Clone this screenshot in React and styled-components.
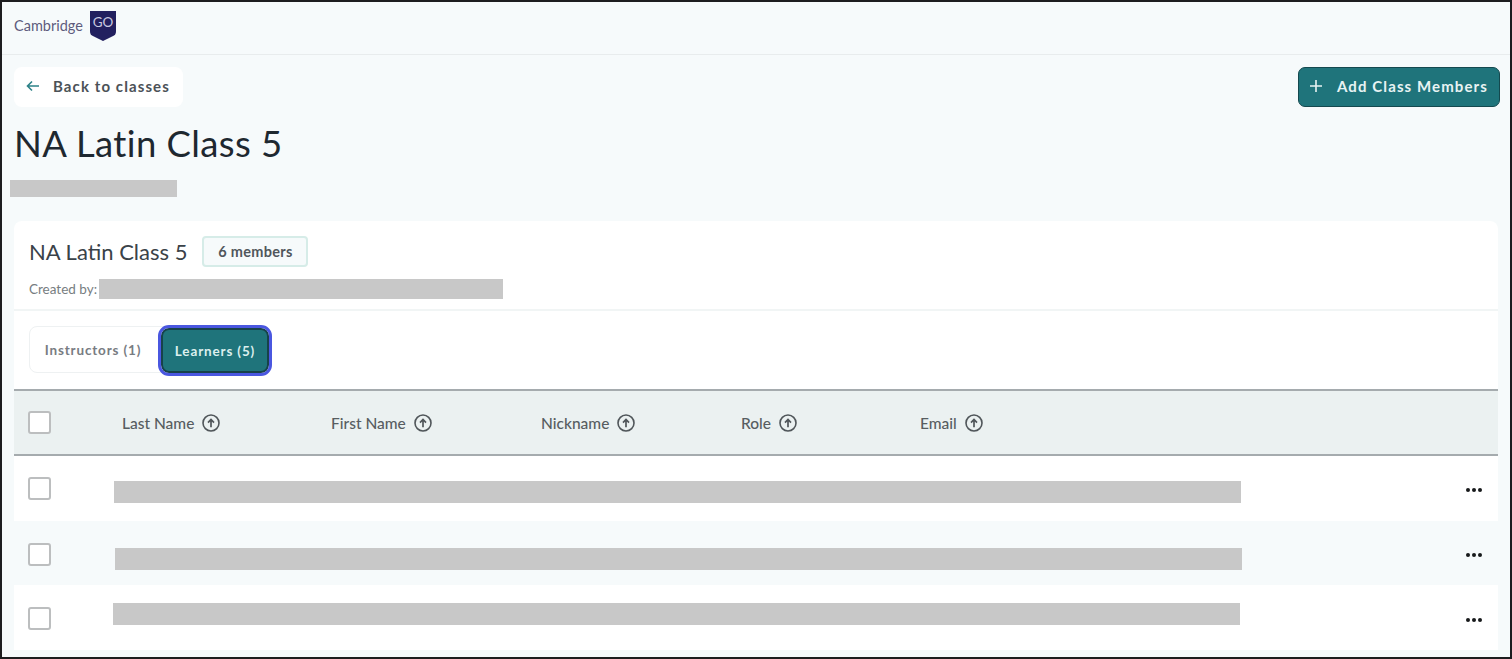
import React from 'react';
import styled, { createGlobalStyle } from 'styled-components';

const Global = createGlobalStyle`
  html, body { margin: 0; padding: 0; background: #f6fafb; }
  * { box-sizing: border-box; }
`;
const Frame = styled.div`
  width: 1512px; height: 659px; overflow: hidden;
  border: 2px solid #1d1d1f;
  background: #f6fafb;
  font-family: Lato, "Open Sans", sans-serif;
  color: #1f2a30;
  display: flex; flex-direction: column;
`;
const TopBar = styled.header`
  height: 53px; flex: none;
  border-bottom: 1px solid #e8eced;
  display: flex; align-items: center; gap: 7px;
  padding: 0 0 5px 12px;
`;
const LogoWord = styled.span`
  font-size: 14.5px; color: #5d5b7d;
`;
const Toolbar = styled.div`
  display: flex; justify-content: space-between;
  padding: 12px 10px 0 12px;
`;
const BackButton = styled.button`
  width: 169px; height: 40px; border: 0; border-radius: 8px; background: #fff;
  display: flex; align-items: center; gap: 13px; padding: 0 0 2px 12px;
  font: 700 15px Lato, sans-serif; letter-spacing: 1.1px; color: #4c5257;
`;
const AddButton = styled.button`
  width: 202px; height: 40px; border: 1px solid #14494f; border-radius: 7px;
  background: #1f747b; color: #e8f3f3;
  display: flex; align-items: center; gap: 14px; padding: 0 0 2px 10px;
  font: 700 15px Lato, sans-serif; letter-spacing: 1.1px;
`;
const Title = styled.h1`
  margin: 14px 0 0 12px; height: 44px; line-height: 44px;
  font-weight: 400; font-size: 36.5px; color: #1e2830; letter-spacing: .4px;
`;
const Redacted = styled.div`
  background: #c8c8c8; flex: none;
  width: ${p => p.$w}px; height: ${p => p.$h}px;
  margin-left: ${p => p.$ml || 0}px;
  margin-top: ${p => p.$mt || 0}px;
`;
const Card = styled.section`
  margin: 24px 12px 0 12px; flex: 1;
  background: #fff; border-radius: 8px 8px 0 0;
  display: flex; flex-direction: column;
`;
const CardHead = styled.div`
  height: 90px; flex: none; border-bottom: 2px solid #f1f5f5;
  padding: 15px 0 0 15px;
`;
const NameRow = styled.div`
  display: flex; align-items: center; gap: 15px; height: 31px;
`;
const CardName = styled.span`
  font-size: 22px; color: #3a4248;
`;
const Badge = styled.span`
  width: 106px; height: 31px; border: 2px solid #d6ece8; border-radius: 4px;
  background: #f6fafb; display: flex; align-items: center; justify-content: center;
  font-size: 14.5px; font-weight: 700; color: #50565b; letter-spacing: .3px;
`;
const CreatedRow = styled.div`
  display: flex; align-items: center; gap: 2px; margin-top: 12px;
  font-size: 13.5px; color: #777d81;
`;
const TabsWrap = styled.div`
  padding: 15px 0 0 15px; height: 78px; flex: none;
`;
const Tabs = styled.div`
  display: inline-flex; height: 47px; width: 242px;
  border: 1px solid #eef1f2; border-radius: 8px; background: #fff;
`;
const Tab = styled.div`
  height: 45px; display: flex; align-items: center; justify-content: center;
  font-size: 13.5px; font-weight: 700; letter-spacing: .85px;
  width: ${p => p.$w}px;
  padding-right: ${p => p.$pr || 0}px;
  color: ${p => (p.$active ? '#dcefee' : '#787c82')};
  ${p => p.$active && `
    background: #1f747b; border: 2px solid #17424a; border-radius: 8px;
    outline: 3px solid #4a57e0; outline-offset: 0; margin-top: 1px;
  `}
`;
const HeadRow = styled.div`
  height: 67px; flex: none; background: #ebf1f1;
  border-top: 2px solid #a5abae; border-bottom: 2px solid #a5abae;
  display: flex; align-items: center; padding: 0 0 0 14px;
`;
const HeadSpacer = styled.div`
  width: 71px; flex: none;
`;
const HeadCell = styled.div`
  display: flex; align-items: center; gap: 8px;
  width: ${p => p.$w}px; flex: none;
  font-size: 15.5px; font-weight: 500; color: #575d61; white-space: nowrap;
`;
const Box = styled.span`
  display: block; flex: none; width: 23px; height: 23px; background: #fff;
  border: 2px solid #bcbebf; border-radius: 3px;
  margin-top: ${p => p.$mt || 0}px;
`;
const Row = styled.div`
  height: ${p => p.$h}px; flex: none;
  background: ${p => (p.$alt ? '#f6fafb' : '#fff')};
  display: flex; align-items: flex-start; padding: 0 0 0 14px;
`;
const TableEnd = styled.div`
  flex: 1; background: #f6fafb;
`;
const Dots = styled.div`
  display: flex; gap: 2px; margin-left: auto; margin-right: 16px;
  margin-top: ${p => p.$mt}px;
  span { width: 4px; height: 4px; border-radius: 50%; background: #17191b; display: block; }
`;

const SortIcon = () => (
  <svg width="18" height="18" viewBox="0 0 18 18" fill="none" stroke="#50565a" strokeWidth="1.6">
    <circle cx="9" cy="9" r="8" />
    <path d="M9 13.2V6M6 8.6 9 5.4l3 3.2" strokeWidth="1.7" />
  </svg>
);

const Logo = () => (
  <svg width="26" height="31" viewBox="0 0 27 31" preserveAspectRatio="none">
    <path d="M0 1h27v20c0 3-1 4-3 5l-10.500 5L3 26c-2-1-3-2-3-5z" fill="#22205f" />
    <text x="13.500" y="17" fontSize="14" fill="#c9c9e0" textAnchor="middle" fontFamily="Lato, sans-serif">GO</text>
  </svg>
);

const heads = [['Last Name', 209], ['First Name', 210], ['Nickname', 200], ['Role', 179], ['Email', 100]];
const rows = [
  { h: 65, alt: false, box: 21, ml: 63, w: 1127, bar: 25, dot: 32 },
  { h: 64, alt: true, box: 22, ml: 64, w: 1127, bar: 27, dot: 32 },
  { h: 65, alt: false, box: 22, ml: 62, w: 1127, bar: 18, dot: 33 },
];

export default function App() {
  return (
    <Frame>
      <Global />
      <TopBar>
        <LogoWord>Cambridge</LogoWord>
        <Logo />
      </TopBar>
      <Toolbar>
        <BackButton>
          <svg width="14" height="14" viewBox="0 0 14 14" fill="none" stroke="#2d8288" strokeWidth="1.6">
            <path d="M13 7H1.500M6 2.500 1.500 7 6 11.500" />
          </svg>
          Back to classes
        </BackButton>
        <AddButton>
          <svg width="14" height="14" viewBox="0 0 14 14" fill="none" stroke="#e8f3f3" strokeWidth="1.6">
            <path d="M7 1v12M1 7h12" />
          </svg>
          Add Class Members
        </AddButton>
      </Toolbar>
      <Title>NA Latin Class 5</Title>
      <Redacted $w={167} $h={17} $ml={8} $mt={15} />
      <Card>
        <CardHead>
          <NameRow>
            <CardName>NA Latin Class 5</CardName>
            <Badge>6 members</Badge>
          </NameRow>
          <CreatedRow>
            Created by:
            <Redacted $w={404} $h={20} />
          </CreatedRow>
        </CardHead>
        <TabsWrap>
          <Tabs>
            <Tab $w={131} $pr={5}>Instructors (1)</Tab>
            <Tab $active $w={108}>Learners (5)</Tab>
          </Tabs>
        </TabsWrap>
        <HeadRow>
          <Box />
          <HeadSpacer />
          {heads.map(([t, w]) => (
            <HeadCell key={t} $w={w}>{t}<SortIcon /></HeadCell>
          ))}
        </HeadRow>
        {rows.map((r, i) => (
          <Row key={i} $h={r.h} $alt={r.alt}>
            <Box $mt={r.box} />
            <Redacted $w={r.w} $h={22} $ml={r.ml} $mt={r.bar} />
            <Dots $mt={r.dot}><span /><span /><span /></Dots>
          </Row>
        ))}
        <TableEnd />
      </Card>
    </Frame>
  );
}
